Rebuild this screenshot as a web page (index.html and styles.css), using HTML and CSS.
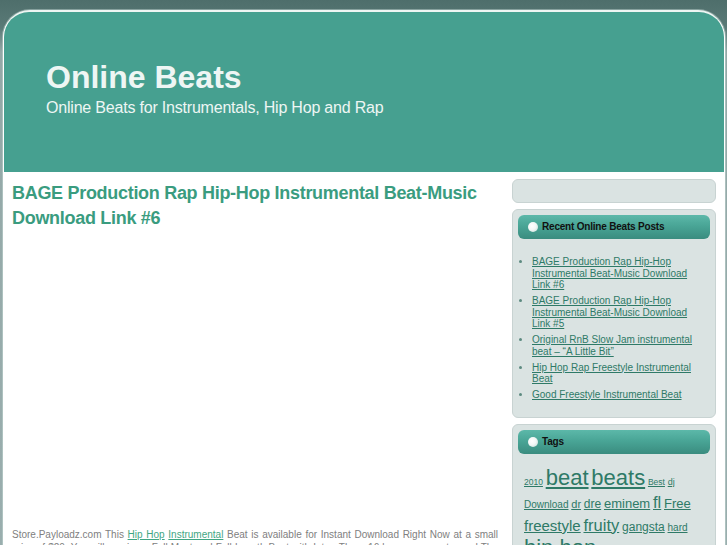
FILE: index.html
```html
<!DOCTYPE html>
<html lang="en">
<head>
<meta charset="utf-8">
<title>Online Beats</title>
<link rel="stylesheet" href="styles.css">
</head>
<body>
<div class="page">
  <header class="header">
    <h1 class="site-title">Online Beats</h1>
    <p class="tagline">Online Beats for Instrumentals, Hip Hop and Rap</p>
  </header>
  <div class="content">
    <main class="main">
      <h2 class="post-title">BAGE Production Rap Hip-Hop Instrumental Beat-Music Download Link #6</h2>
      <div class="embed"></div>
      <p class="post-text">Store.Payloadz.com This <a href="#">Hip Hop</a> <a href="#">Instrumental</a> Beat is available for Instant Download Right Now at a small price of $20. You will receive a Full Mastered Full Length Beat with Intro, Three 16 bar verses, outro and The Hooks in a high quality mp3 file.</p>
    </main>
    <aside class="sidebar">
      <div class="box box-empty"></div>
      <div class="box">
        <h3 class="box-title"><span class="dot"></span>Recent Online Beats Posts</h3>
        <ul class="recent">
          <li><a href="#">BAGE Production Rap Hip-Hop Instrumental Beat-Music Download Link #6</a></li>
          <li><a href="#">BAGE Production Rap Hip-Hop Instrumental Beat-Music Download Link #5</a></li>
          <li><a href="#">Original RnB Slow Jam instrumental beat – “A Little Bit”</a></li>
          <li><a href="#">Hip Hop Rap Freestyle Instrumental Beat</a></li>
          <li><a href="#">Good Freestyle Instrumental Beat</a></li>
        </ul>
      </div>
      <div class="box">
        <h3 class="box-title"><span class="dot"></span>Tags</h3>
        <div class="cloud">
          <a href="#" class="t1">2010</a> <a href="#" class="t9">beat</a> <a href="#" class="t9">beats</a> <a href="#" class="t1">Best</a> <a href="#" class="t2">dj</a> <a href="#" class="t3">Download</a> <a href="#" class="t4">dr</a> <a href="#" class="t5">dre</a> <a href="#" class="t6">eminem</a> <a href="#" class="t8">fl</a> <a href="#" class="t6">Free</a> <a href="#" class="t7">freestyle</a> <a href="#" class="t8">fruity</a> <a href="#" class="t5">gangsta</a> <a href="#" class="t3">hard</a> <a href="#" class="t9">hip hop</a> <a href="#" class="t4">instrumental</a> <a href="#" class="t6">loops</a>
        </div>
      </div>
    </aside>
  </div>
</div>
</body>
</html>
```

FILE: styles.css
```css
* { box-sizing: border-box; }

html, body {
  margin: 0;
  padding: 0;
}

body {
  font-family: "Liberation Sans", Arial, sans-serif;
  background: linear-gradient(#4e6e6b 0, #5a7a77 28px, #93a8a7 52px, #9aaeae 100%);
  height: 545px;
  overflow: hidden;
}

.page {
  margin: 10px 2px 0 3px;
  width: 722px;
  background: #ffffff;
  border-top: 2px solid #eef5f3;
  border-left: 1px solid #ffffff;
  border-right: 1px solid #ffffff;
  border-radius: 27px 27px 0 0;
  box-shadow: 0 0 0 1px rgba(200, 220, 216, 0.45);
  min-height: 540px;
}

.header {
  height: 160px;
  background: #46a090;
  border-radius: 25px 25px 0 0;
  padding: 49px 0 0 42px;
  color: #eef6f4;
}

.site-title {
  margin: 0;
  font-size: 32px;
  line-height: 32px;
  font-weight: bold;
}

.tagline {
  margin: 7px 0 0;
  font-size: 16px;
  line-height: 16px;
  letter-spacing: -0.2px;
}

.content {
  display: flex;
  align-items: flex-start;
  gap: 14px;
  padding: 7px 8px 0 8px;
}

.main {
  width: 486px;
  flex: none;
}

.post-title {
  margin: 2px 0 0;
  font-size: 18px;
  line-height: 25px;
  font-weight: bold;
  letter-spacing: -0.3px;
  color: #3a9c7f;
}

.embed {
  height: 281px;
  margin: 8px 0;
}

.post-text {
  margin: 0;
  font-size: 10px;
  line-height: 13px;
  color: #808080;
  text-align: justify;
}

.post-text a {
  color: #3fa683;
}

.sidebar {
  width: 204px;
  flex: none;
  display: flex;
  flex-direction: column;
  gap: 6px;
}

.box {
  background: #dae3e2;
  border: 1px solid #c8d3d2;
  border-radius: 6px;
  padding: 5px;
}

.box-empty {
  height: 24px;
}

.box-title {
  position: relative;
  margin: 0;
  height: 24px;
  line-height: 24px;
  padding-left: 24px;
  border-radius: 6px;
  background: linear-gradient(#5cb8a9 0, #49a596 45%, #3a8c7f 100%);
  font-size: 10px;
  font-weight: bold;
  letter-spacing: -0.2px;
  color: #111;
}

.dot {
  position: absolute;
  left: 10px;
  top: 7px;
  width: 10px;
  height: 10px;
  border-radius: 50%;
  background: radial-gradient(circle at 40% 40%, #ffffff 0, #f2f7f6 45%, #bcd8d2 100%);
}

.recent {
  margin: 17px 0 11px;
  padding: 0 0 0 14px;
  list-style: disc;
  color: #5d8a80;
  font-size: 10px;
  line-height: 11.5px;
}

.recent li {
  margin-bottom: 4.5px;
  padding-right: 12px;
}

.recent a,
.cloud a {
  color: #2e7a67;
}

.cloud {
  margin: 14px 0 0;
  padding: 0 8px 0 6px;
  font-size: 10px;
  line-height: 20px;
  height: 100px;
}

.t1 { font-size: 8.5px; }
.t2 { font-size: 9px; }
.t3 { font-size: 10px; }
.t4 { font-size: 11px; }
.t5 { font-size: 12px; }
.t6 { font-size: 13px; }
.t7 { font-size: 15px; }
.t8 { font-size: 16.5px; }
.t9 { font-size: 22px; }
```
